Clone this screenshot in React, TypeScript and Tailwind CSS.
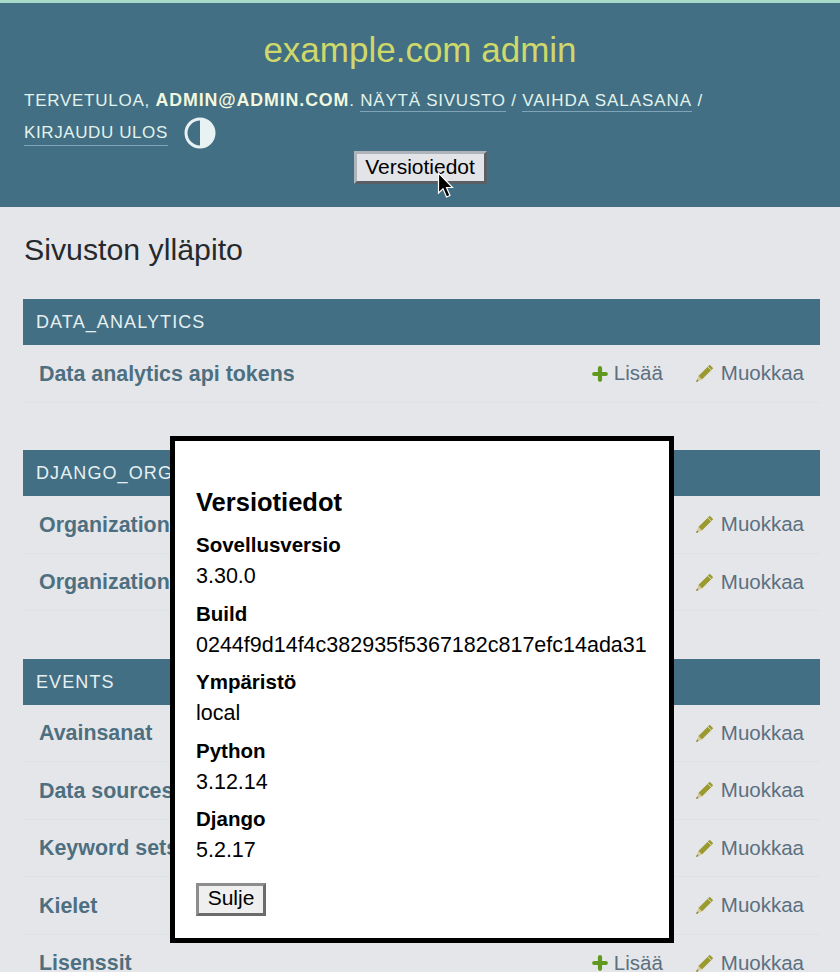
import { Plus } from 'lucide-react'

const sections = [
  {
    title: 'DATA_ANALYTICS',
    rows: [{ name: 'Data analytics api tokens', add: true }]
  },
  {
    title: 'DJANGO_ORGANIZATIONS',
    rows: [
      { name: 'Organization classes', add: true },
      { name: 'Organizations', add: true }
    ]
  },
  {
    title: 'EVENTS',
    rows: [
      { name: 'Avainsanat', add: true },
      { name: 'Data sources', add: true },
      { name: 'Keyword sets', add: true },
      { name: 'Kielet', add: true },
      { name: 'Lisenssit', add: true }
    ]
  }
]

const versions = [
  ['Sovellusversio', '3.30.0'],
  ['Build', '0244f9d14f4c382935f5367182c817efc14ada31'],
  ['Ympäristö', 'local'],
  ['Python', '3.12.14'],
  ['Django', '5.2.17']
]

function PencilIcon() {
  return (
    <svg viewBox="0 0 18 18" className="mr-[7px] size-[19px]">
      <path d="M14 .8 L17.2 4 L6.6 14.8 L3.2 11.4 Z" fill="#9a9a2f" />
      <path d="M12.2 2.6 L15.4 5.8" stroke="#e3e3c8" strokeWidth=".9" />
      <path d="M3.2 11.4 L6.6 14.8 L1 17 Z" fill="#d6c896" />
      <path d="M1.9 14.6 L3.4 16.1 L1 17 Z" fill="#77772a" />
    </svg>
  )
}

function Row({ name, add }: { name: string; add: boolean }) {
  return (
    <div className="flex h-[57.5px] items-center border-b border-[#dfe2e5] px-[16px] pt-[1px]">
      <span className="flex-1 text-[21.4px] font-bold text-[#4d6f80]">{name}</span>
      {add && (
        <span className="mr-[32px] flex items-center text-[20.5px] text-[#5b7080]">
          <Plus size={20} strokeWidth={5} className="mr-[4px] text-[#5f9a1f]" />
          Lisää
        </span>
      )}
      <span className="flex items-center text-[20.5px] text-[#5b7080]">
        <PencilIcon />
        Muokkaa
      </span>
    </div>
  )
}

export default function App() {
  return (
    <div className="relative h-[972px] w-[840px] overflow-hidden bg-[#e5e6ea] font-['Liberation_Sans',sans-serif]">
      <div className="h-[3px] bg-[#a9d9c8]" />

      <header className="flex h-[204px] flex-col bg-[#426f83] px-[24px]">
        <h1 className="mt-[26px] text-center text-[35px] leading-[42px] text-[#cfd86a]">
          example.com admin
        </h1>
        <div className="mt-[13px] text-[17px] leading-[32px] tracking-[0.75px] text-[#e3f3ee]">
          <div>
            TERVETULOA, <b className="text-[17.8px] tracking-[0.9px] text-[#f2f7df]">ADMIN@ADMIN.COM</b>.{' '}
            <span className="border-b border-[#7fa3b8] pb-[1px]">NÄYTÄ SIVUSTO</span> /{' '}
            <span className="border-b border-[#7fa3b8] pb-[1px] tracking-[0.95px]">VAIHDA SALASANA</span> /
          </div>
          <div className="flex items-center">
            <span className="border-b border-[#7fa3b8] leading-[25px] tracking-[0.6px]">KIRJAUDU ULOS</span>
            <svg viewBox="0 0 32 32" className="ml-[16px] size-[32px]">
              <circle cx="16" cy="16" r="14" fill="#426f83" stroke="#e8f2f2" strokeWidth="3" />
              <path d="M16 2 A14 14 0 0 1 16 30 Z" fill="#e8f2f2" />
            </svg>
          </div>
        </div>
        <div className="mt-[2px] flex justify-center">
          <button className="h-[33px] w-[133px] border-[3px] border-b-[#5a5f66] border-l-[#aeb4ba] border-r-[#5a5f66] border-t-[#aeb4ba] bg-[#e3e4e8] pb-[2px] text-[21px] leading-[22px] text-black">
            Versiotiedot
          </button>
        </div>
      </header>

      <main className="px-[23px]">
        <h2 className="ml-[1px] mt-[24px] text-[30.3px] leading-[38px] text-[#262a2e]">Sivuston ylläpito</h2>
        <div className="mt-[30px] flex flex-col gap-[47.5px]">
          {sections.map((section) => (
            <section key={section.title} className="w-[797px]">
              <div className="flex h-[46px] items-center bg-[#426f83] px-[13px] pt-[1px] text-[18px] tracking-[1.1px] text-[#e6f0f2]">
                {section.title}
              </div>
              {section.rows.map((row) => (
                <Row key={row.name} {...row} />
              ))}
            </section>
          ))}
        </div>
      </main>

      <div className="absolute left-[170px] top-[436px] h-[507px] w-[504px] border-[5px] border-black bg-white px-[21px] text-black">
        <h3 className="mt-[47px] text-[25.5px] font-bold leading-[29px]">Versiotiedot</h3>
        <dl className="mt-[13px]">
          {versions.map(([label, value]) => (
            <div key={label} className="mb-[6.5px]">
              <dt className="text-[20.5px] font-bold leading-[30px]">{label}</dt>
              <dd className="pt-[1px] text-[21.5px] leading-[31px]">{value}</dd>
            </div>
          ))}
        </dl>
        <button className="mt-[10px] h-[33px] w-[70px] border-[3px] border-b-[#6c6c6c] border-l-[#8d8d8d] border-r-[#6c6c6c] border-t-[#8d8d8d] bg-[#efefef] pb-[2px] text-[21px] leading-[22px]">
          Sulje
        </button>
      </div>

      <svg viewBox="0 0 18 28" className="absolute left-[437px] top-[172px] h-[28px] w-[18px]">
        <path
          d="M1.5 1 L1.5 21 L6 16.8 L9.5 25 L13 23.5 L9.5 15.5 L15.5 15.5 Z"
          fill="#000"
          stroke="#fff"
          strokeWidth="1.2"
        />
      </svg>
    </div>
  )
}
